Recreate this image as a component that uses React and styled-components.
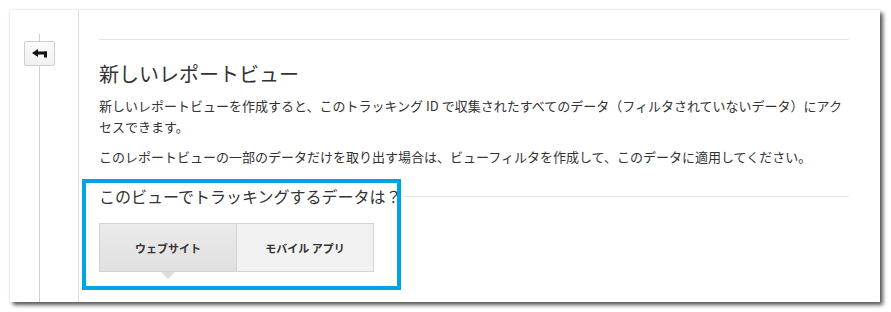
import React from 'react'
import styled, { createGlobalStyle } from 'styled-components'

const GlobalStyle = createGlobalStyle`
  html, body {
    margin: 0;
    padding: 0;
    background: #fff;
  }
  body {
    font-family: "Noto Sans CJK JP", "Noto Sans", sans-serif;
    color: #333;
  }
`

const Card = styled.div`
  margin: 10px;
  width: 870px;
  height: 292px;
  background: #fff;
  box-shadow: 3px 3px 4px rgba(0, 0, 0, 0.65), 0 0 3px rgba(0, 0, 0, 0.12);
  display: flex;
  overflow: hidden;
`

const Rail = styled.div`
  width: 69px;
  padding: 24px 0 0 14px;
  box-sizing: border-box;
  border-right: 1px solid #ddd;
`

const RailColumn = styled.div`
  width: 31px;
  height: 100%;
  display: flex;
  flex-direction: column;
  align-items: center;
`

const Stem = styled.div`
  width: 1px;
  background: #d0d0d0;
  height: ${(p) => (p.$grow ? 'auto' : `${p.$h}px`)};
  flex: ${(p) => (p.$grow ? 1 : 'none')};
`

const BackButton = styled.button`
  width: 31px;
  height: 25px;
  padding: 0;
  border: 1px solid #cfcfcf;
  border-radius: 2px;
  background: linear-gradient(#fbfbfb, #f0f0f0);
  display: flex;
  align-items: center;
  justify-content: center;
  cursor: pointer;
`

const Content = styled.div`
  width: 750px;
  padding: 29px 0 0 20px;
`

const Rule = styled.div`
  height: 1px;
  background: #e3e3e3;
  flex: ${(p) => (p.$fill ? 1 : 'none')};
`

const Title = styled.h1`
  margin: 20px 0 7px;
  font-size: 20px;
  line-height: 28px;
  font-weight: 400;
  color: #333;
`

const Text = styled.p`
  margin: 0 0 9px;
  font-size: 13px;
  line-height: 21px;
  color: #333;
`

const Section = styled.section`
  position: relative;
  margin-top: 18px;
`

const SectionHead = styled.div`
  display: flex;
  align-items: center;
  gap: 2px;
`

const SectionTitle = styled.h2`
  margin: 0;
  font-size: 16px;
  line-height: 22px;
  font-weight: 400;
  color: #333;
  white-space: nowrap;
`

const Segmented = styled.div`
  display: flex;
  margin-top: 16px;
  width: 275px;
`

const Segment = styled.button`
  position: relative;
  flex: 1;
  height: 49px;
  padding: 0;
  font-family: inherit;
  font-size: 11px;
  font-weight: 700;
  color: #333;
  border: 1px solid #d3d3d3;
  border-left-width: ${(p) => (p.$first ? '1px' : '0')};
  background: ${(p) => (p.$active ? 'linear-gradient(#ebebeb, #e0e0e0)' : '#f2f2f2')};
  cursor: pointer;

  &::after {
    content: '';
    display: ${(p) => (p.$active ? 'block' : 'none')};
    position: absolute;
    left: 50%;
    bottom: -8px;
    margin-left: -7px;
    border-left: 7px solid transparent;
    border-right: 7px solid transparent;
    border-top: 7px solid #dcdcdc;
  }
`

const Highlight = styled.div`
  position: absolute;
  left: -17px;
  top: -6px;
  width: 319px;
  height: 111px;
  box-sizing: border-box;
  border: 4px solid #00a3e4;
  pointer-events: none;
`

const BackArrow = () => (
  <svg width="16" height="10" viewBox="0 0 16 10">
    <polygon points="0,4 6,0 6,8" fill="#111" />
    <rect x="5" y="2.5" width="10" height="3" fill="#111" />
    <rect x="12" y="2.5" width="3" height="6" fill="#111" />
  </svg>
)

export default function App() {
  return (
    <>
      <GlobalStyle />
      <Card>
        <Rail>
          <RailColumn>
            <Stem $h={7} />
            <BackButton aria-label="戻る">
              <BackArrow />
            </BackButton>
            <Stem $grow />
          </RailColumn>
        </Rail>
        <Content>
          <Rule />
          <Title>新しいレポートビュー</Title>
          <Text>
            新しいレポートビューを作成すると、このトラッキング ID で収集されたすべてのデータ（フィルタされていないデータ）にアク
            <br />
            セスできます。
          </Text>
          <Text>
            このレポートビューの一部のデータだけを取り出す場合は、ビューフィルタを作成して、このデータに適用してください。
          </Text>
          <Section>
            <SectionHead>
              <SectionTitle>このビューでトラッキングするデータは？</SectionTitle>
              <Rule $fill />
            </SectionHead>
            <Segmented>
              <Segment $first $active>ウェブサイト</Segment>
              <Segment>モバイル アプリ</Segment>
            </Segmented>
            <Highlight />
          </Section>
        </Content>
      </Card>
    </>
  )
}
